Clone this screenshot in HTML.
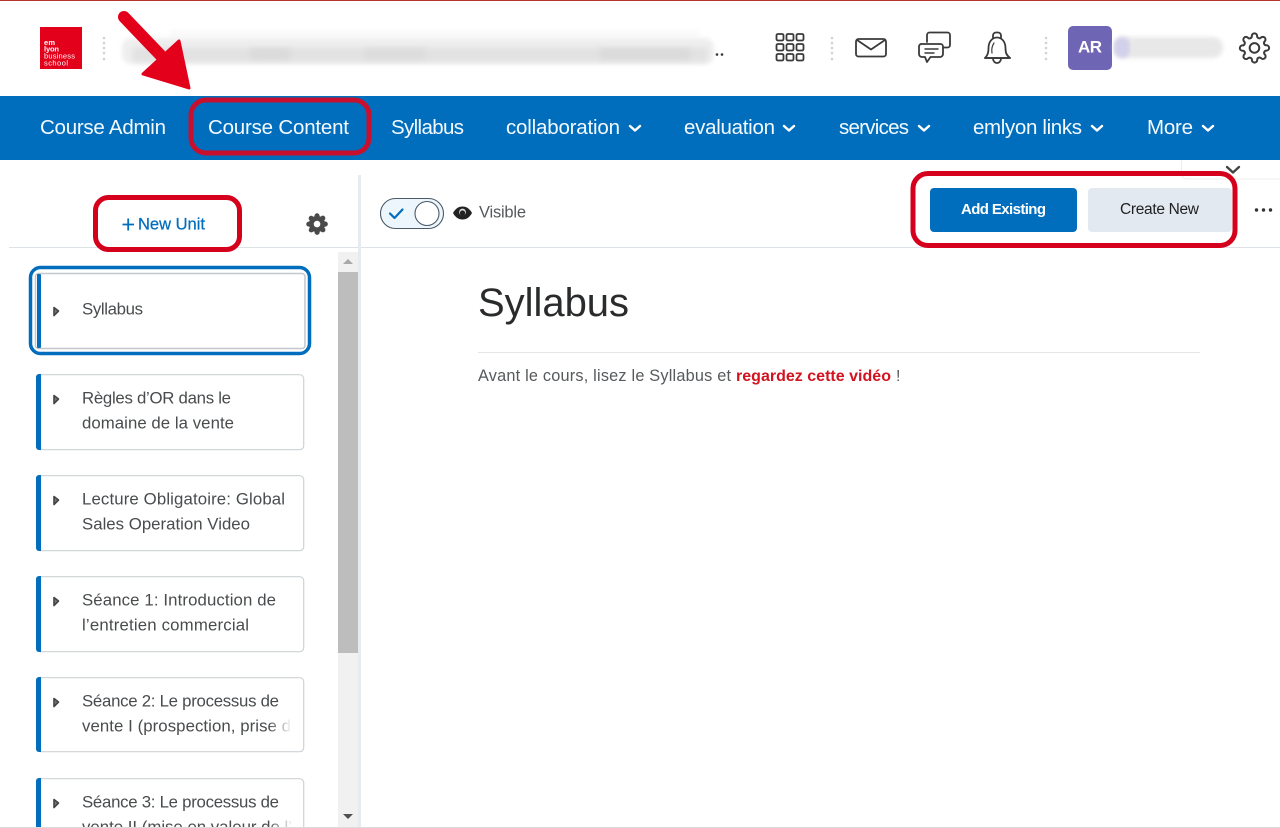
<!DOCTYPE html>
<html lang="en"><head><meta charset="utf-8"><title>Course Content</title>
<style>
html,body{margin:0;padding:0;background:#fff;width:1280px;height:828px;overflow:hidden}
svg{display:block}
text{font-family:"Liberation Sans",Arial,sans-serif}
.nav{font-size:20.5px;fill:#f4faff}
.side{font-size:16.8px;fill:#494c4e}
.chev{fill:none;stroke:#fff;stroke-width:2.4;stroke-linecap:round;stroke-linejoin:round}
.ic{fill:none;stroke:#3a3a3a;stroke-width:1.8;stroke-linecap:round;stroke-linejoin:round}
.card{fill:#fff;stroke:#cfd2d6;stroke-width:1.2}
.bar{fill:#006ebc}
.tri{fill:#777;stroke:#444;stroke-width:1.6;stroke-linejoin:round}
.red{fill:none;stroke-width:5}
</style></head><body>
<svg width="1280" height="828" viewBox="0 0 1280 828" xmlns="http://www.w3.org/2000/svg">
<defs>
<filter id="b1" x="-5%" y="-60%" width="110%" height="220%"><feGaussianBlur stdDeviation="2"/></filter>
<filter id="b2" x="-10%" y="-60%" width="120%" height="220%"><feGaussianBlur stdDeviation="3"/></filter>
<linearGradient id="fade" x1="0" x2="1" y1="0" y2="0"><stop offset="0" stop-color="#fff" stop-opacity="0"/><stop offset="1" stop-color="#fff"/></linearGradient>
<path id="gear" d="M19.4 15a1.65 1.65 0 0 0 .33 1.82l.06.06a2 2 0 0 1 0 2.83 2 2 0 0 1-2.83 0l-.06-.06a1.65 1.65 0 0 0-1.82-.33 1.65 1.65 0 0 0-1 1.51V21a2 2 0 0 1-2 2 2 2 0 0 1-2-2v-.09A1.65 1.65 0 0 0 9 19.4a1.65 1.65 0 0 0-1.82.33l-.06.06a2 2 0 0 1-2.83 0 2 2 0 0 1 0-2.83l.06-.06a1.65 1.65 0 0 0 .33-1.82 1.65 1.65 0 0 0-1.51-1H3a2 2 0 0 1-2-2 2 2 0 0 1 2-2h.09A1.65 1.65 0 0 0 4.6 9a1.65 1.65 0 0 0-.33-1.82l-.06-.06a2 2 0 0 1 0-2.83 2 2 0 0 1 2.83 0l.06.06a1.65 1.65 0 0 0 1.82.33H9a1.65 1.65 0 0 0 1-1.51V3a2 2 0 0 1 2-2 2 2 0 0 1 2 2v.09a1.65 1.65 0 0 0 1 1.51 1.65 1.65 0 0 0 1.82-.33l.06-.06a2 2 0 0 1 2.83 0 2 2 0 0 1 0 2.83l-.06.06a1.65 1.65 0 0 0-.33 1.82V9a1.65 1.65 0 0 0 1.51 1H21a2 2 0 0 1 2 2 2 2 0 0 1-2 2h-.09a1.65 1.65 0 0 0-1.51 1z"/>
</defs>
<rect width="1280" height="828" fill="#fff"/>
<rect width="1280" height="1" fill="#b5342c"/>

<!-- logo -->
<rect x="40" y="27" width="42" height="42" fill="#e2001a"/>
<g fill="#fff" font-size="7.500">
<text x="44" y="45" font-weight="700" textLength="11">em</text>
<text x="44" y="51.500" font-weight="700" textLength="15">lyon</text>
<text x="44" y="58.500" textLength="31">business</text>
<text x="44" y="65.500" textLength="24">school</text>
</g>
<g fill="#d2d2d2"><circle cx="104" cy="38" r="1.300"/><circle cx="104" cy="43" r="1.300"/><circle cx="104" cy="48" r="1.300"/><circle cx="104" cy="53" r="1.300"/><circle cx="104" cy="59" r="1.300"/>
<circle cx="832" cy="38" r="1.300"/><circle cx="832" cy="43" r="1.300"/><circle cx="832" cy="48" r="1.300"/><circle cx="832" cy="53" r="1.300"/><circle cx="832" cy="59" r="1.300"/>
<circle cx="1046" cy="38" r="1.300"/><circle cx="1046" cy="43" r="1.300"/><circle cx="1046" cy="48" r="1.300"/><circle cx="1046" cy="53" r="1.300"/><circle cx="1046" cy="59" r="1.300"/></g>

<!-- blurred title -->
<rect x="170" y="30" width="530" height="8" fill="#f9f9f9" filter="url(#b1)"/>
<rect x="122" y="38" width="592" height="26" rx="9" fill="#efefef" filter="url(#b1)"/>
<rect x="132" y="47" width="576" height="15" rx="4" fill="#e2e2e2" filter="url(#b2)"/>
<rect x="250" y="49" width="40" height="10" fill="#dadada" filter="url(#b2)"/>
<rect x="365" y="49" width="60" height="10" fill="#dcdcdc" filter="url(#b2)"/>
<rect x="600" y="49" width="90" height="10" fill="#dadada" filter="url(#b2)"/>
<circle cx="717" cy="54.500" r="1.300" fill="#333"/><circle cx="722" cy="54.500" r="1.300" fill="#333"/>

<!-- header icons -->
<g class="ic"><rect x="776.500" y="34" width="7" height="6.500" rx="1.500"/><rect x="786.500" y="34" width="7" height="6.500" rx="1.500"/><rect x="796.500" y="34" width="7" height="6.500" rx="1.500"/>
<rect x="776.500" y="44" width="7" height="6.500" rx="1.500"/><rect x="786.500" y="44" width="7" height="6.500" rx="1.500"/><rect x="796.500" y="44" width="7" height="6.500" rx="1.500"/>
<rect x="776.500" y="54" width="7" height="6.500" rx="1.500"/><rect x="786.500" y="54" width="7" height="6.500" rx="1.500"/><rect x="796.500" y="54" width="7" height="6.500" rx="1.500"/></g>
<g class="ic"><rect x="856" y="39" width="30" height="17.500" rx="2.500"/><path d="M857 40l14 9.500 14-9.500"/></g>
<g class="ic"><path d="M927 42v-7a2.500 2.500 0 0 1 2.500-2.500h18a2.500 2.500 0 0 1 2.500 2.500v10a2.500 2.500 0 0 1-2.500 2.500h-4"/><path d="M922 44h18.500a2.500 2.500 0 0 1 2.500 2.500v7.500a3 3 0 0 1-3 3h-9.500l-3.500 5-2-5h-3a3 3 0 0 1-3-3v-7.500a2.500 2.500 0 0 1 3-2.500z"/><path d="M925 49h13M925 53h9" stroke-width="1.400"/></g>
<g class="ic"><path d="M993 38v-2.500a3 3 0 0 1 3-3h2a3 3 0 0 1 3 3V38"/><path d="M985 58c3-3 3.500-6 3.500-10 0-6 3.500-10.500 8.500-10.500s8.500 4.500 8.500 10.500c0 4 .5 7 4.500 10z"/><path d="M985 58h25"/><path d="M993 58.500a4 4.500 0 0 0 8 0"/><path d="M992 53c-.5-3 0-7 2-10" stroke-width="1.200"/></g>
<rect x="1068" y="26" width="44" height="44" rx="5" fill="#6e66b5"/>
<text x="1078" y="52.500" font-size="17" font-weight="700" fill="#fff" textLength="24">AR</text>
<rect x="1114" y="37" width="109" height="21" rx="10" fill="#e8e8e8" filter="url(#b1)"/>
<rect x="1114" y="37" width="16" height="21" rx="8" fill="#d2d0ea" filter="url(#b1)"/>
<g transform="translate(1238.500 32) scale(1.330)"><use href="#gear" fill="none" stroke="#3a3a3a" stroke-width="1.500"/><circle cx="12" cy="12" r="3.600" fill="none" stroke="#3a3a3a" stroke-width="1.500"/></g>

<!-- nav -->
<rect x="0" y="96" width="1280" height="64" fill="#006ebd"/>
<g class="nav">
<text x="40" y="134" textLength="126">Course Admin</text>
<text x="208" y="134" textLength="141">Course Content</text>
<text x="391" y="134" textLength="73">Syllabus</text>
<text x="506" y="134" textLength="114">collaboration</text>
<text x="684" y="134" textLength="91">evaluation</text>
<text x="839" y="134" textLength="70">services</text>
<text x="973" y="134" textLength="109">emlyon links</text>
<text x="1147" y="134" textLength="46">More</text>
</g>
<g class="chev"><path d="M630 126l5 4.500 5-4.500"/><path d="M784 126l5 4.500 5-4.500"/><path d="M919 126l5 4.500 5-4.500"/><path d="M1092 126l5 4.500 5-4.500"/><path d="M1203 126l5 4.500 5-4.500"/></g>
<rect x="191" y="100" width="178" height="53" rx="15" class="red" stroke="#c8102e"/>

<!-- arrow -->
<path d="M124 17L168 63" stroke="#e2001a" stroke-width="12" stroke-linecap="round"/>
<path d="M179 41L189 88L143 74Z" fill="#e2001a" stroke="#e2001a" stroke-width="3" stroke-linejoin="round"/>

<!-- tab under nav -->
<path d="M1181.500 160v14a5 5 0 0 0 5 5H1280" fill="none" stroke="#ececec"/>
<path d="M1227 167l6 5.500 6-5.500" fill="none" stroke="#444" stroke-width="2.400" stroke-linecap="round" stroke-linejoin="round"/>

<!-- dividers -->
<rect x="9" y="247" width="1271" height="1" fill="#dde1e8"/>
<rect x="358" y="175" width="3" height="653" fill="#e6eaf1"/>

<!-- toolbar sidebar -->
<path d="M122.500 224.500h11.500M128.200 218.500v12" stroke="#006ebd" stroke-width="1.800" fill="none"/>
<text x="138" y="229.500" font-size="16.500" fill="#006ebd" textLength="67" stroke="#006ebd" stroke-width=".25">New Unit</text>
<g transform="translate(306 213) scale(.92)"><use href="#gear" fill="#4a4a4a" stroke="#4a4a4a" stroke-width="1.500"/><circle cx="12" cy="12" r="3.600" fill="#fff"/></g>
<rect x="95.500" y="197.500" width="144" height="52" rx="13" class="red" stroke="#d5001c"/>

<!-- scrollbar -->
<rect x="338" y="252" width="20" height="576" fill="#f1f1f1"/>
<rect x="338" y="272" width="20" height="381" fill="#bdbdbd"/>
<path d="M343 264l5-5 5 5z" fill="#a8a8a8"/>
<path d="M343 814h10l-5 5z" fill="#505050"/>

<!-- selected unit -->
<rect x="30.500" y="267.500" width="279" height="86" rx="10" fill="#fff" stroke="#006ebd" stroke-width="3.500"/>
<rect x="35.500" y="273.500" width="269.500" height="75" rx="3" fill="#fff" stroke="#c4c7cc" stroke-width="1.500"/>
<rect x="37" y="274" width="4" height="74" rx="1" class="bar"/>
<path class="tri" d="M54 307.500l4.500 3.500-4.500 4.500z"/>
<text class="side" x="82" y="314.500" textLength="61">Syllabus</text>

<!-- units -->
<g>
<rect x="36.700" y="374.700" width="267" height="75" rx="4" class="card"/><path class="bar" d="M41 374h-2a3 3 0 0 0-3 3v70a3 3 0 0 0 3 3h2z"/>
<path class="tri" d="M54 395.500l4.500 3.500-4.500 4.500z"/>
<text class="side" x="82" y="403.500" textLength="149">Règles d’OR dans le</text>
<text class="side" x="82" y="428.500" textLength="152">domaine de la vente</text>

<rect x="36.700" y="475.700" width="267" height="75" rx="4" class="card"/><path class="bar" d="M41 475h-2a3 3 0 0 0-3 3v70a3 3 0 0 0 3 3h2z"/>
<path class="tri" d="M54 496.500l4.500 3.500-4.500 4.500z"/>
<text class="side" x="82" y="504.500" textLength="203">Lecture Obligatoire: Global</text>
<text class="side" x="82" y="529.500" textLength="168">Sales Operation Video</text>

<rect x="36.700" y="576.700" width="267" height="75" rx="4" class="card"/><path class="bar" d="M41 576h-2a3 3 0 0 0-3 3v70a3 3 0 0 0 3 3h2z"/>
<path class="tri" d="M54 597.500l4.500 3.500-4.500 4.500z"/>
<text class="side" x="82" y="605.500" textLength="194">Séance 1: Introduction de</text>
<text class="side" x="82" y="630.500" textLength="167">l’entretien commercial</text>

<rect x="36.700" y="677.700" width="267" height="74" rx="4" class="card"/><path class="bar" d="M41 677h-2a3 3 0 0 0-3 3v69a3 3 0 0 0 3 3h2z"/>
<path class="tri" d="M54 698.500l4.500 3.500-4.500 4.500z"/>
<text class="side" x="82" y="706.500" textLength="197">Séance 2: Le processus de</text>
<text class="side" x="82" y="731.500" textLength="209">vente I (prospection, prise d</text>
<rect x="268" y="716" width="24" height="20" fill="url(#fade)"/>

<rect x="36.700" y="778.700" width="267" height="70" rx="4" class="card"/><path class="bar" d="M41 778h-2a3 3 0 0 0-3 3v50h5z"/>
<path class="tri" d="M54 799.500l4.500 3.500-4.500 4.500z"/>
<text class="side" x="82" y="807.500" textLength="197">Séance 3: Le processus de</text>
<text class="side" x="82" y="832.500" textLength="210">vente II (mise en valeur de l’</text>
<rect x="268" y="817" width="26" height="10" fill="url(#fade)"/>
</g>
<rect x="0" y="827" width="1280" height="1" fill="#dcdcdc"/>

<!-- toggle -->
<rect x="380.500" y="198.500" width="63" height="30" rx="15" fill="#edf6fc" stroke="#4b5a66" stroke-width="1.100"/>
<circle cx="427" cy="213.500" r="12" fill="#fff" stroke="#4b5a66" stroke-width="1.100"/>
<path d="M390 213.500l4.500 4.500 8-8.500" fill="none" stroke="#006ebd" stroke-width="2.200" stroke-linecap="round" stroke-linejoin="round"/>
<path d="M453 213c2.500-4.500 5.500-6.500 9.500-6.500s7 2 9.500 6.500c-2.500 4.500-5.500 6.500-9.500 6.500s-7-2-9.500-6.500z" fill="#222"/>
<circle cx="462.500" cy="212" r="3.400" fill="#ddd"/><circle cx="462.500" cy="213" r="2.600" fill="#222"/>
<text x="479" y="217.500" font-size="16.500" fill="#565a5c" textLength="47">Visible</text>

<!-- buttons -->
<rect x="930" y="188" width="147" height="44" rx="4" fill="#006ebd"/>
<text x="961" y="214" font-size="15" font-weight="700" fill="#fff" textLength="85">Add Existing</text>
<rect x="1088" y="188" width="144" height="44" rx="4" fill="#e3e9f1"/>
<text x="1120" y="214" font-size="15.500" fill="#202122" textLength="79">Create New</text>
<rect x="913" y="173.500" width="322" height="72" rx="15" class="red" stroke="#d5001c"/>
<circle cx="1256.500" cy="210" r="1.700" fill="#333"/><circle cx="1263.500" cy="210" r="1.700" fill="#333"/><circle cx="1270.500" cy="210" r="1.700" fill="#333"/>

<!-- content -->
<text x="478" y="316" font-size="40" fill="#2a2b2c" textLength="151">Syllabus</text>
<rect x="478" y="352" width="722" height="1" fill="#e6e6e6"/>
<text x="478" y="381" font-size="16.300" fill="#565a5c" textLength="253">Avant le cours, lisez le Syllabus et</text>
<text x="736" y="381" font-size="16" font-weight="700" fill="#d3131f" textLength="155">regardez cette vidéo</text>
<text x="896" y="381" font-size="16" fill="#565a5c">!</text>
</svg>
</body></html>
